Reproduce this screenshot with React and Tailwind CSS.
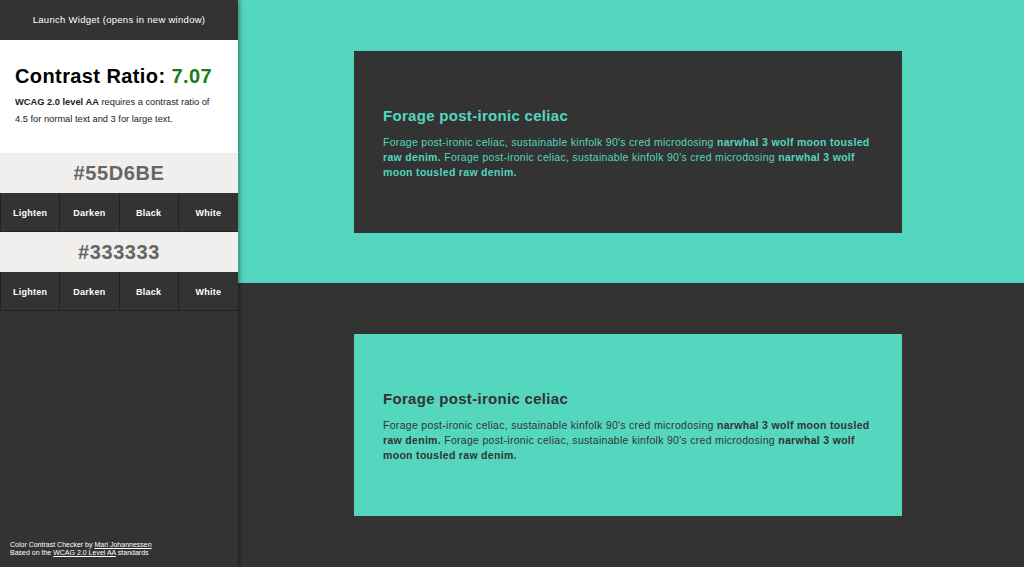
export default function App() {
  const btns = ["Lighten", "Darken", "Black", "White"];
  const Card = ({ dark }) => (
    <div
      className={`w-[548px] h-[182px] ml-[116px] px-[29px] pt-[56px] ${
        dark ? "bg-[#333333] text-[#55D6BE]" : "bg-[#55D6BE] text-[#333333]"
      }`}
    >
      <h2 className="text-[15px] font-bold leading-[18px] tracking-[0.02em]">Forage post-ironic celiac</h2>
      <p className="mt-[10px] text-[10.5px] leading-[15px] tracking-[0.028em]">
        Forage post-ironic celiac, sustainable kinfolk 90's cred microdosing{" "}
        <b className="tracking-[0.03em]">narwhal 3 wolf moon tousled raw denim.</b> Forage post-ironic celiac, sustainable kinfolk 90's cred
        microdosing <b className="tracking-[0.03em]">narwhal 3 wolf moon tousled raw denim.</b>
      </p>
    </div>
  );
  const Buttons = () => (
    <div className="grid grid-cols-4 h-[39px] bg-[#333333] border-l border-[#222]">
      {btns.map((b, i) => (
        <div
          key={b}
          className={`flex items-center justify-center pt-[3px] text-white text-[9px] font-bold tracking-[0.03em] border-b border-[#222] ${
            i < 3 ? "border-r" : ""
          }`}
        >
          {b}
        </div>
      ))}
    </div>
  );
  return (
    <div className="flex w-[1024px] h-[567px] overflow-hidden bg-[#333333]" style={{ fontFamily: '"Liberation Sans", Arial, sans-serif' }}>
      <div className="relative z-10 w-[238px] shrink-0 flex flex-col bg-[#333333] shadow-[2px_0_4px_rgba(0,0,0,0.35)]">
        <div className="h-[40px] flex items-center justify-center text-white text-[9.5px] tracking-[0.03em]">
          Launch Widget (opens in new window)
        </div>
        <div className="h-[113px] bg-white px-[15px] pt-[24px]">
          <div className="text-[20px] font-bold leading-[24px] text-black tracking-[0.02em]">
            Contrast Ratio: <span className="text-[#157f15]">7.07</span>
          </div>
          <p className="mt-[6px] text-[9.3px] leading-[17px] text-[#222]">
            <b>WCAG 2.0 level AA</b> requires a contrast ratio of 4.5 for normal text and 3 for large text.
          </p>
        </div>
        <div className="h-[40px] bg-[#f0efed] flex items-center justify-center text-[20px] font-bold text-[#666] tracking-[0.03em]">
          #55D6BE
        </div>
        <Buttons />
        <div className="h-[40px] bg-[#f0efed] flex items-center justify-center text-[20px] font-bold text-[#666] tracking-[0.03em]">
          #333333
        </div>
        <Buttons />
        <div className="flex-1" />
        <div className="px-[10px] pb-[10px] text-[7px] leading-[8px] text-white">
          <div>
            Color Contrast Checker by <span className="underline">Mari Johannessen</span>
          </div>
          <div>
            Based on the <span className="underline">WCAG 2.0 Level AA</span> standards
          </div>
        </div>
      </div>
      <div className="flex-1 flex flex-col">
        <div className="h-[283px] bg-[#55D6BE] pt-[51px]">
          <Card dark />
        </div>
        <div className="flex-1 bg-[#333333] pt-[51px]">
          <Card />
        </div>
      </div>
    </div>
  );
}
